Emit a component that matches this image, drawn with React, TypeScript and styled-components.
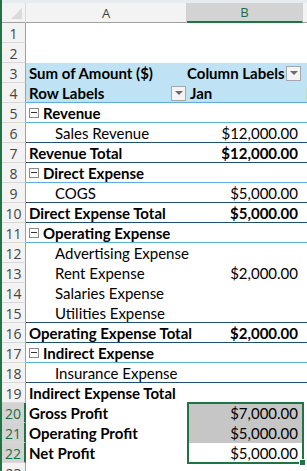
import styled, { createGlobalStyle, css } from 'styled-components';

const GlobalStyle = createGlobalStyle`
  html, body {
    margin: 0;
    padding: 0;
    background: #ffffff;
  }
  body {
    font-family: Lato, "Open Sans", sans-serif;
  }
`;

const GREEN = '#217346';
const PIVOT_BLUE = '#bfe3f4';
const LIGHT_LINE = '#5eaedb';
const DARK_LINE = '#1f4e6e';

type RowKind = 'empty' | 'head' | 'group' | 'item' | 'total' | 'calc';
type Line = 'none' | 'light' | 'dark';

interface SheetRow {
  n: number;
  kind: RowKind;
  label?: string;
  value?: string;
  line?: Line;
  selected?: boolean;
  shaded?: boolean;
}

const rows: SheetRow[] = [
  { n: 1, kind: 'empty' },
  { n: 2, kind: 'empty' },
  { n: 3, kind: 'head', label: 'Sum of Amount ($)' },
  { n: 4, kind: 'head', label: 'Row Labels', line: 'light' },
  { n: 5, kind: 'group', label: 'Revenue', line: 'light' },
  { n: 6, kind: 'item', label: 'Sales Revenue', value: '$12,000.00', line: 'dark' },
  { n: 7, kind: 'total', label: 'Revenue Total', value: '$12,000.00', line: 'dark' },
  { n: 8, kind: 'group', label: 'Direct Expense', line: 'light' },
  { n: 9, kind: 'item', label: 'COGS', value: '$5,000.00', line: 'dark' },
  { n: 10, kind: 'total', label: 'Direct Expense Total', value: '$5,000.00', line: 'dark' },
  { n: 11, kind: 'group', label: 'Operating Expense', line: 'light' },
  { n: 12, kind: 'item', label: 'Advertising Expense' },
  { n: 13, kind: 'item', label: 'Rent Expense', value: '$2,000.00' },
  { n: 14, kind: 'item', label: 'Salaries Expense' },
  { n: 15, kind: 'item', label: 'Utilities Expense', line: 'dark' },
  { n: 16, kind: 'total', label: 'Operating Expense Total', value: '$2,000.00', line: 'dark' },
  { n: 17, kind: 'group', label: 'Indirect Expense', line: 'light' },
  { n: 18, kind: 'item', label: 'Insurance Expense', line: 'dark' },
  { n: 19, kind: 'total', label: 'Indirect Expense Total' },
  { n: 20, kind: 'calc', label: 'Gross Profit', value: '$7,000.00', selected: true, shaded: true },
  { n: 21, kind: 'calc', label: 'Operating Profit', value: '$5,000.00', selected: true, shaded: true },
  { n: 22, kind: 'calc', label: 'Net Profit', value: '$5,000.00', selected: true },
  { n: 23, kind: 'empty' },
];

const Window = styled.div`
  position: relative;
  width: 307px;
  height: 471px;
  overflow: hidden;
  border-left: 2px solid ${GREEN};
  box-sizing: border-box;
  background: #ffffff;
`;

const TopStrip = styled.div`
  height: 3px;
  background: #e7ecf0;
`;

const Grid = styled.div`
  display: grid;
  grid-template-columns: 24px 161px 116px 100px;
  grid-auto-rows: 20px;
`;

const Corner = styled.div`
  background: #f3f3f3;
  border-right: 1px solid #d8d8d8;
  border-bottom: 1px solid #a0a0a0;
  position: relative;
  &::after {
    content: '';
    position: absolute;
    right: 3px;
    bottom: 3px;
    width: 0;
    height: 0;
    border-left: 11px solid transparent;
    border-bottom: 11px solid #dadada;
  }
`;

const ColHead = styled.div<{ $active?: boolean }>`
  display: flex;
  align-items: center;
  justify-content: center;
  font-family: "Open Sans", sans-serif;
  font-size: 13px;
  color: ${p => (p.$active ? '#1e6b40' : '#444444')};
  background: ${p => (p.$active ? '#d3d3d3' : '#f3f3f3')};
  border-right: 1px solid #d0d0d0;
  border-bottom: ${p => (p.$active ? `2px solid ${GREEN}` : '1px solid #a0a0a0')};
  box-sizing: border-box;
`;

const RowHead = styled.div<{ $selected?: boolean }>`
  display: flex;
  align-items: center;
  justify-content: center;
  padding-top: 1px;
  font-family: "Open Sans", sans-serif;
  font-size: 14px;
  color: ${p => (p.$selected ? '#1e6b40' : '#444444')};
  background: ${p => (p.$selected ? '#d3d3d3' : '#f3f3f3')};
  border-bottom: 1px solid #d8d8d8;
  border-right: ${p => (p.$selected ? `2px solid ${GREEN}` : '1px solid #a0a0a0')};
  box-sizing: border-box;
`;

const lineColor = (l?: Line) =>
  l === 'light' ? LIGHT_LINE : l === 'dark' ? DARK_LINE : 'transparent';

const Cell = styled.div<{ $kind: RowKind; $line?: Line; $right?: boolean; $shaded?: boolean }>`
  display: flex;
  align-items: center;
  justify-content: ${p => (p.$right ? 'flex-end' : 'flex-start')};
  gap: 2px;
  padding: ${p => (p.$right ? '1px 5px 0 0' : '1px 0 0 3px')};
  font-size: 15px;
  color: #000000;
  white-space: nowrap;
  overflow: visible;
  box-sizing: border-box;
  border-bottom: 1px solid ${p => lineColor(p.$line)};
  font-weight: ${p => (p.$kind === 'item' || (p.$kind === 'calc' && p.$right) ? 400 : 700)};
  ${p =>
    p.$kind === 'head' &&
    css`
      background: ${PIVOT_BLUE};
    `}
  ${p =>
    p.$shaded &&
    css`
      background: #c6c6c6;
    `}
  ${p =>
    p.$kind === 'item' &&
    !p.$right &&
    css`
      padding-left: 29px;
    `}
`;

const LabelCell = styled(Cell)`
  position: relative;
  z-index: 1;
`;

const HeadCell = styled(Cell)`
  justify-content: space-between;
  padding-right: 1px;
`;

const Collapse = styled.span`
  display: inline-block;
  position: relative;
  width: 10px;
  height: 10px;
  margin: 0 2px 0 0;
  border: 1px solid #8a8a8a;
  background: #ffffff;
  box-sizing: border-box;
  &::after {
    content: '';
    position: absolute;
    left: 1px;
    right: 1px;
    top: 3px;
    height: 1px;
    background: #333333;
  }
`;

const Dropdown = styled.span`
  display: inline-flex;
  align-items: center;
  justify-content: center;
  width: 15px;
  height: 15px;
  border: 1px solid #a7a7a7;
  background: #f4f4f4;
  box-sizing: border-box;
  &::after {
    content: '';
    width: 0;
    height: 0;
    border-left: 4px solid transparent;
    border-right: 4px solid transparent;
    border-top: 4px solid #6b6b6b;
  }
`;

const Selection = styled.div`
  position: absolute;
  left: 185px;
  top: 402px;
  width: 117px;
  height: 62px;
  border: 2px solid ${GREEN};
  box-sizing: border-box;
  pointer-events: none;
  &::after {
    content: '';
    position: absolute;
    right: -4px;
    bottom: -4px;
    width: 5px;
    height: 5px;
    background: ${GREEN};
    border: 1px solid #ffffff;
  }
`;

const Row = styled.div`
  display: contents;
`;

const App = () => (
  <>
    <GlobalStyle />
    <Window>
      <TopStrip />
      <Grid>
        <Corner />
        <ColHead>A</ColHead>
        <ColHead $active>B</ColHead>
        <ColHead />
        {rows.map(r => {
          const line = r.line;
          if (r.kind === 'head') {
            return r.n === 3 ? (
              <Row key={r.n}>
                <RowHead>{r.n}</RowHead>
                <Cell $kind="head" $line={line}>{r.label}</Cell>
                <Cell $kind="head" $line={line} $right style={{ paddingRight: 2 }}>
                  Column Labels <Dropdown />
                </Cell>
                <Cell $kind="head" $line={line} />
              </Row>
            ) : (
              <Row key={r.n}>
                <RowHead>{r.n}</RowHead>
                <HeadCell $kind="head" $line={line}>
                  {r.label}
                  <Dropdown />
                </HeadCell>
                <Cell $kind="head" $line={line}>Jan</Cell>
                <Cell $kind="head" $line={line}>Feb</Cell>
              </Row>
            );
          }
          return (
            <Row key={r.n}>
              <RowHead $selected={r.selected}>{r.n}</RowHead>
              <LabelCell $kind={r.kind} $line={line}>
                {r.kind === 'group' && <Collapse />}
                {r.label}
              </LabelCell>
              <Cell $kind={r.kind} $line={line} $right $shaded={r.shaded}>
                {r.value}
              </Cell>
              <Cell $kind={r.kind} $line={line} />
            </Row>
          );
        })}
      </Grid>
      <Selection />
    </Window>
  </>
);

export default App;
